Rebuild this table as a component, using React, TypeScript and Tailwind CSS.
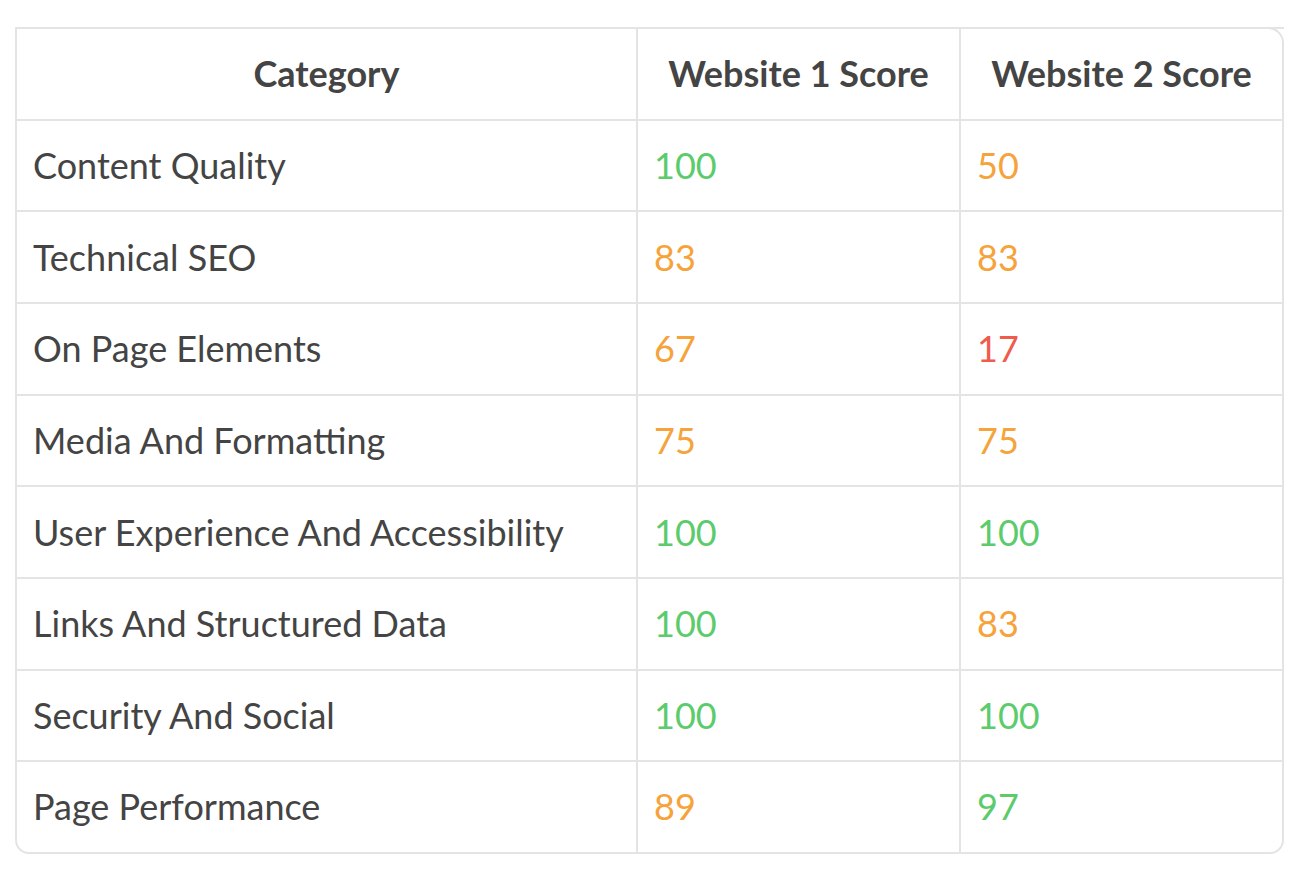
import React from "react";

const G = "text-[#5ccb6c]";
const O = "text-[#f5a33a]";
const R = "text-[#ef5b4c]";

type Row = { name: string; a: number; b: number };

const rows: Row[] = [
  { name: "Content Quality", a: 100, b: 50 },
  { name: "Technical SEO", a: 83, b: 83 },
  { name: "On Page Elements", a: 67, b: 17 },
  { name: "Media And Formatting", a: 75, b: 75 },
  { name: "User Experience And Accessibility", a: 100, b: 100 },
  { name: "Links And Structured Data", a: 100, b: 83 },
  { name: "Security And Social", a: 100, b: 100 },
  { name: "Page Performance", a: 89, b: 97 },
];

function color(v: number) {
  if (v >= 90) return G;
  if (v >= 50) return O;
  return R;
}

export default function App() {
  return (
    <div
      className="w-[1302px] h-[878px] bg-white pt-[27px] pl-[15px]"
      style={{ fontFamily: "Lato, 'Open Sans', sans-serif" }}
    >
      <div className="w-[1269px] border-2 border-[#e4e4e4] rounded-tr-[16px] rounded-br-[14px] rounded-bl-[14px] text-[#444444] text-[36px] leading-[1.2]">
        <div className="-mx-[2px] -mt-[2px] px-[2px] border-t-2 border-[#e4e4e4] grid grid-cols-[621px_323px_1fr] h-[93.67px] border-b-2 font-bold">
          <div className="border-r-2 border-[#e4e4e4] flex items-center justify-center">Category</div>
          <div className="border-r-2 border-[#e4e4e4] flex items-center justify-center">Website 1 Score</div>
          <div className="flex items-center justify-center">Website 2 Score</div>
        </div>
        {rows.map((r, i) => (
          <div
            key={r.name}
            className={
              i === rows.length - 1
                ? "grid grid-cols-[621px_323px_1fr] h-[89.67px]"
                : "grid grid-cols-[621px_323px_1fr] h-[91.67px] border-b-2 border-[#e4e4e4]"
            }
          >
            <div className="border-r-2 border-[#e4e4e4] flex items-center pl-[16px]">{r.name}</div>
            <div className={"border-r-2 border-[#e4e4e4] flex items-center pl-[16px] " + color(r.a)}>{r.a}</div>
            <div className={"flex items-center pl-[16px] " + color(r.b)}>{r.b}</div>
          </div>
        ))}
      </div>
    </div>
  );
}
